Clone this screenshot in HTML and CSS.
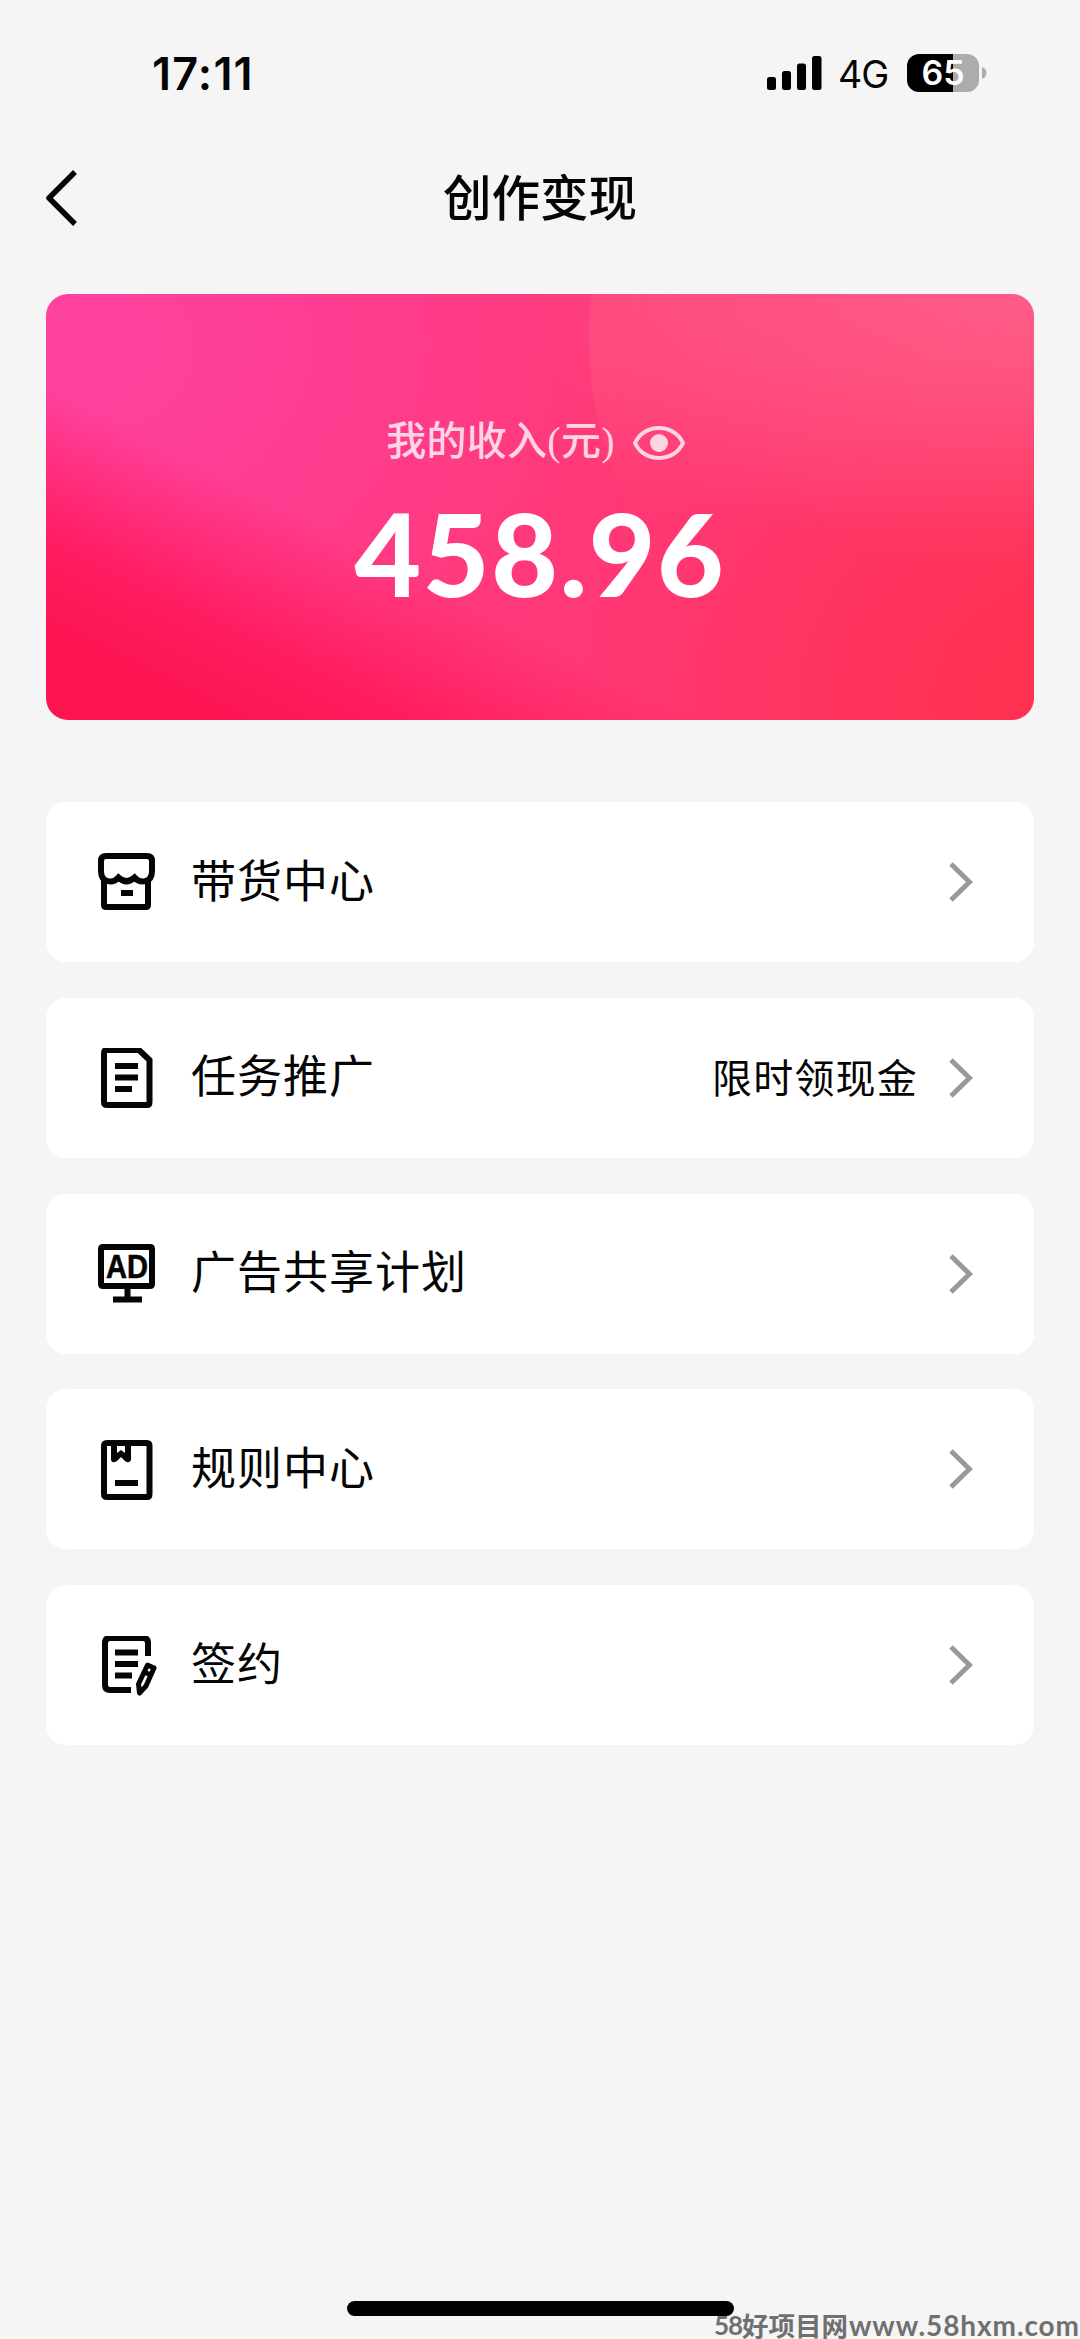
FILE: index.html
```html
<!DOCTYPE html>
<html lang="zh-CN">
<head>
<meta charset="utf-8">
<title>创作变现</title>
<link rel="stylesheet" href="styles.css">
</head>
<body>
<main class="screen">
  <div class="status">
    <span class="time">17:11</span>
    <div class="indicators">
      <svg class="signal" width="56" height="36" viewBox="0 0 56 36"><rect x="0" y="21" width="9" height="13" rx="2.5"/><rect x="15" y="15" width="9" height="19" rx="2.5"/><rect x="30" y="7.500" width="9" height="26.500" rx="2.500"/><rect x="45" y="0" width="9.500" height="34" rx="2.500"/></svg>
      <span class="network">4G</span>
      <div class="battery"><span>65</span></div>
      <svg class="tip" width="5" height="12" viewBox="0 0 5 12"><path d="M0 0C6 2 6 10 0 12Z"/></svg>
    </div>
  </div>
  <header class="nav">
    <svg class="back" width="32" height="56" viewBox="0 0 32 56"><path d="M30 2 4 28 30 54"/></svg>
    <h1>创作变现</h1>
  </header>
  <section class="income">
    <div class="label"><span>我的收入(元)</span>
      <svg width="54" height="38" viewBox="0 0 54 38"><path d="M3 19C12-1 42-1 51 19C42 39 12 39 3 19Z" fill="none" stroke="#ffd4e3" stroke-width="4"/><circle cx="27" cy="19" r="9" fill="#ffd4e3"/></svg>
    </div>
    <div class="amount">458.96</div>
  </section>
  <nav class="list">
    <a class="row">
      <svg class="icon" viewBox="0 0 60 60"><path d="M6 26V52Q6 54 8 54H48Q50 54 50 52V26"/><path d="M8 3H49Q54 3 54 8V18C54 30 42 31 36.500 24.500Q28.500 32 20.500 24.500C15 31 3 30 3 18V8Q3 3 8 3Z"/><path d="M23 40H35"/></svg>
      <span class="name">带货中心</span>
      <svg class="chevron" viewBox="0 0 24 40"><path d="M2 2 20.500 20 2 38"/></svg>
    </a>
    <a class="row">
      <svg class="icon" viewBox="0 0 60 60"><path d="M9 2H41L51.500 12V54Q51.500 57 49 57H9Q6 57 6 54V5Q6 2 9 2Z"/><path d="M17 18H40M17 29.500H40M17 41H34"/></svg>
      <span class="name">任务推广</span>
      <span class="note">限时领现金</span>
      <svg class="chevron" viewBox="0 0 24 40"><path d="M2 2 20.500 20 2 38"/></svg>
    </a>
    <a class="row">
      <svg class="icon" viewBox="0 0 60 60"><path d="M5 3H52Q54 3 54 5V40Q54 42 52 42H5Q3 42 3 40V5Q3 3 5 3ZM29.500 42V56M15 55.500H44"/><text x="8" y="34" textLength="42" lengthAdjust="spacingAndGlyphs">AD</text></svg>
      <span class="name">广告共享计划</span>
      <svg class="chevron" viewBox="0 0 24 40"><path d="M2 2 20.500 20 2 38"/></svg>
    </a>
    <a class="row">
      <svg class="icon" viewBox="0 0 60 60"><path d="M9 3H49Q51.500 3 51.500 6V54Q51.500 57 49 57H9Q6 57 6 54V6Q6 3 9 3ZM17 43H40"/><path d="M13 3H33V20Q31 24 27 21L23 17 19 21Q14 24 13 20Z" class="solid"/><path d="M19 6H27V13L23 10 19 13Z" fill="#fff" stroke="none"/></svg>
      <span class="name">规则中心</span>
      <svg class="chevron" viewBox="0 0 24 40"><path d="M2 2 20.500 20 2 38"/></svg>
    </a>
    <a class="row">
      <svg class="icon" viewBox="0 0 60 60"><path d="M50 20V7Q50 2 45 2H12Q7 2 7 7V49Q7 54 12 54H33M17 16.500H40M17 28H40M17 39.500H34"/><path d="M49.500 29 56 32 48 50 41.500 57 40.500 48Z" class="pen"/><path d="M46 36 53 39" class="pen"/></svg>
      <span class="name">签约</span>
      <svg class="chevron" viewBox="0 0 24 40"><path d="M2 2 20.500 20 2 38"/></svg>
    </a>
  </nav>
  <div class="home"></div>
  <div class="watermark"><span class="digits">58</span><span class="site">好项目网</span><span class="url">www.58hxm.com</span></div>
</main>
</body>
</html>
```
FILE: styles.css
```css
* { box-sizing: border-box; }
body { margin: 0; background: #f5f5f5; color: #050505; font-family: "Noto Sans CJK SC", sans-serif; }
.screen { position: relative; width: 1080px; height: 2339px; overflow: hidden; display: flex; flex-direction: column; }
.status { height: 148px; flex: none; display: flex; justify-content: space-between; align-items: center; padding: 0 93px 0 152px; font-family: Inter, sans-serif; }
.time { font-size: 45px; font-weight: 600; letter-spacing: 1.2px; line-height: 54px; }
.indicators { display: flex; align-items: center; }
.signal { margin-right: 15px; margin-top: 0; }
.network { width: 69px; font-size: 37.5px; line-height: 46px; margin-top: 2px; letter-spacing: -1px; }
.battery { width: 72px; height: 38px; margin-bottom: 3px; border-radius: 12px; background: linear-gradient(90deg, #000 64%, #acacac 64%); color: #fff; font-size: 34px; font-weight: 600; line-height: 38px; text-align: center; }
.tip { margin-left: 3px; fill: #acacac; margin-bottom: 3px; }
.nav { height: 146px; flex: none; display: grid; grid-template-columns: 1fr auto 1fr; align-items: center; padding: 0 45px 46px; }
.back path { fill: none; stroke: #050505; stroke-width: 5.5; stroke-linejoin: round; }
.nav h1 { margin: -3px 0 3px; font-size: 48.5px; font-weight: 500; line-height: 70px; }
.income { position: relative; overflow: hidden; height: 426px; flex: none; margin: 0 46px; padding-top: 119px; border-radius: 22px; display: flex; flex-direction: column; align-items: center;
  background:
    radial-gradient(ellipse 520px 300px at 100% -6%, rgba(255,125,185,.5), rgba(255,110,150,0) 100%),
    radial-gradient(ellipse 440px 300px at 104% 95%, rgba(255,48,76,.85), rgba(255,48,76,0) 100%),
    linear-gradient(27deg, #fc1450 9%, rgba(255,22,88,.85) 19%, rgba(255,40,120,0) 36%),
    radial-gradient(ellipse 560px 380px at 0 12%, #ff429e 12%, rgba(255,66,158,0) 100%),
    linear-gradient(100deg, #ff378c 0, #ff3979 50%, #ff366c 75%, #ff3460 100%); }
.income::before { content: ""; position: absolute; inset: 0; background: radial-gradient(circle 390px at 932px 44px, rgba(255,125,130,.16) 0, rgba(255,125,140,.22) 99.5%, transparent 100%); -webkit-mask-image: linear-gradient(#000 15%, transparent 55%); mask-image: linear-gradient(#000 15%, transparent 55%); }
.label { position: relative; height: 58px; display: flex; align-items: center; gap: 17px; color: #ffd4e3; font-size: 40px; font-weight: 500; line-height: 58px; margin-right: 8px; }
.label span { font-family: "Liberation Serif", "Noto Sans CJK SC", serif; letter-spacing: .3px; }
.label svg { margin-top: 2px; }
.amount { position: relative; color: #fff; font-family: Lato, sans-serif; font-size: 115px; font-weight: 900; line-height: 120px; margin-top: 21px; letter-spacing: 1.7px; }
.list { display: grid; grid-template-rows: repeat(5, 160px); gap: 35.75px; margin: 82px 46px 0; }
.row { display: flex; align-items: center; background: #fff; border-radius: 20px; padding: 0 61px 0 52px; }
.icon { width: 60px; height: 60px; flex: none; margin-top: 1px; fill: none; stroke: #050505; stroke-width: 6; }
.icon .solid { fill: #050505; stroke: none; }
.icon .pen { stroke-width: 5; stroke-linejoin: round; }
.icon text { fill: #050505; stroke: #050505; stroke-width: .6; font: 700 33px "Liberation Sans", sans-serif; }
.name { flex: 1; margin-left: 33px; font-size: 45px; font-weight: 400; line-height: 66px; letter-spacing: 1px; margin-bottom: 7px; }
.note { font-size: 40px; font-weight: 400; line-height: 58px; letter-spacing: 1.2px; margin: 0 31px 4px 0; }
.chevron { width: 24px; height: 40px; flex: none; fill: none; stroke: #999; stroke-width: 5; }
.home { position: absolute; left: 347px; top: 2301px; width: 387px; height: 15px; border-radius: 8px; background: #000; }
.watermark { position: absolute; left: 714px; top: 2311px; height: 28px; display: flex; align-items: center; color: #707070; font-family: "Noto Sans CJK SC", sans-serif; font-size: 26.5px; font-weight: 700; line-height: 28px; white-space: nowrap; }
.digits { width: 28px; font-family: Lato, sans-serif; font-size: 26px; letter-spacing: -1px; }
.site { width: 107px; }
.url { font-family: Lato, sans-serif; font-size: 28px; letter-spacing: .9px; }
```
